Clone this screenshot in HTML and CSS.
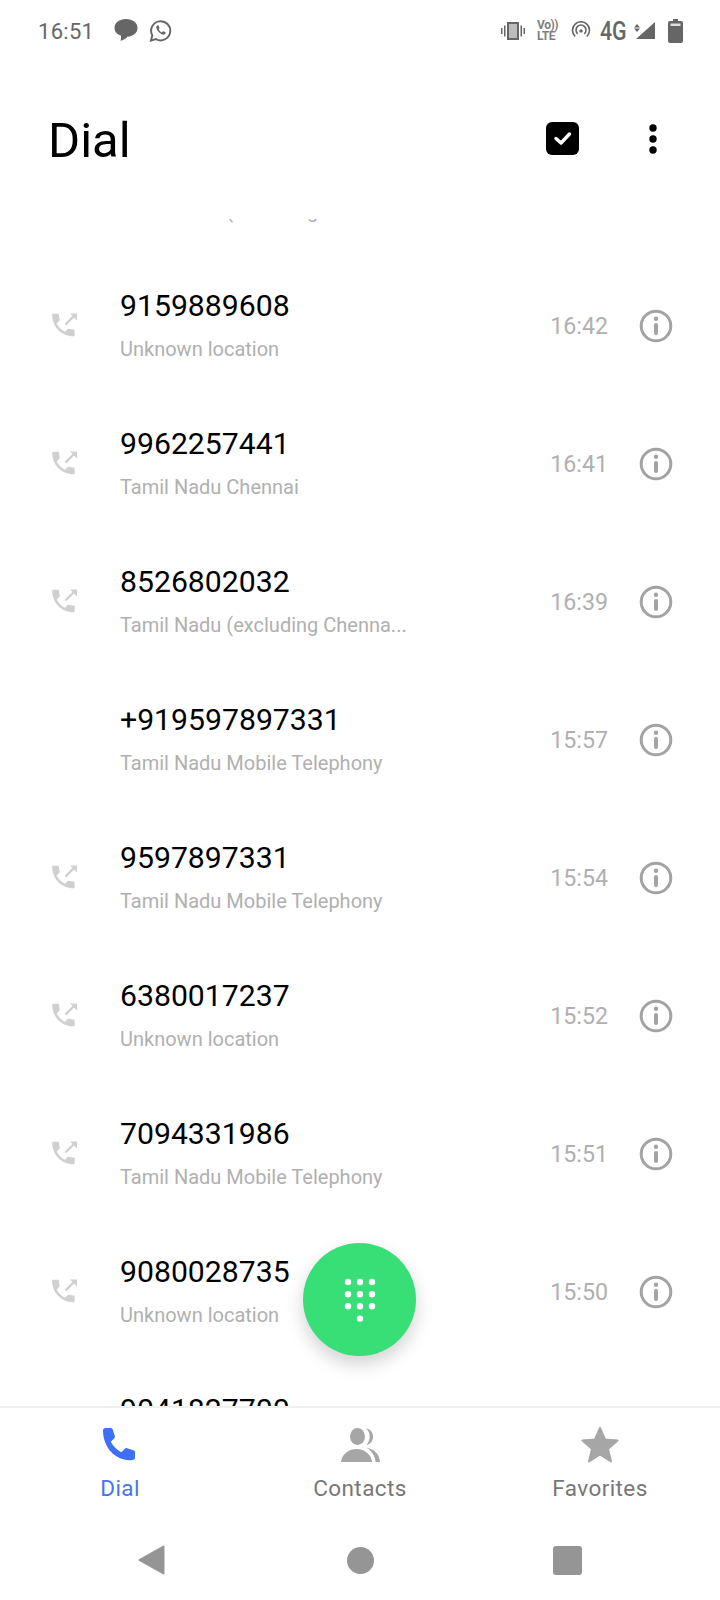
FILE: index.html
```html
<!DOCTYPE html>
<html lang="en">
<head>
<meta charset="utf-8">
<title>Dial</title>
<link rel="stylesheet" href="styles.css">
</head>
<body>
<div class="app">
  <div class="status">
    <div class="status-left">
      <span class="clock">16:51</span>
      <svg class="s-msg" viewBox="0 0 24 22"><path fill="#666" d="M12 0C5.400 0 .5 3.600.5 9c0 3.800 2.800 6.500 6.300 7.600.5 1.700.3 3.600-.3 5.100 2.700-.5 5.200-2 7-4C19.300 17.300 23.500 14 23.500 9 23.500 3.600 18.600 0 12 0z"/></svg>
      <svg class="s-wa" viewBox="0 0 24 24"><path fill="none" stroke="#666" stroke-width="2" d="M2 22.500l1.500-5.300A10 10 0 1 1 7.300 21z"/><path fill="#666" d="M8.800 6.800c-.9.600-1.500 1.800-1 3.200 1 2.900 3.300 5.100 6.200 6.200 1.400.4 2.700-.1 3.200-1.100.3-.6.200-1.100-.1-1.300l-2-1c-.4-.1-.7 0-.9.300l-.7.900c-1.500-.6-2.700-1.800-3.400-3.300l.7-.8c.2-.3.200-.6.100-.9l-.8-2c-.3-.5-.8-.5-1.300-.2z"/></svg>
    </div>
    <div class="status-right">
      <svg class="s-vib" viewBox="0 0 24 20"><path fill="#666" fill-rule="evenodd" d="M6 1h12v18H6zM8 3v14h8V3zM0 7h1.500v6H0zM3 4.500h1.500v11H3zM19.500 4.500H21v11h-1.500zM22.500 7H24v6h-1.500z"/><rect x="8" y="3" width="8" height="14" fill="#bbb"/></svg>
      <span class="volte"><span class="volte-a">Vo))</span><span class="volte-b">LTE</span></span>
      <svg class="s-hot" viewBox="0 0 20 20"><g fill="none" stroke="#666" stroke-width="1.600"><path d="M4.200 15.500a8.500 8.500 0 1 1 11.600 0"/><path d="M6.700 12.800a5 5 0 1 1 6.600 0"/></g><circle cx="10" cy="10" r="1.700" fill="#666"/></svg>
      <span class="net">4G</span>
      <svg class="s-sig" viewBox="0 0 21 18"><path fill="#666" d="M21 0v17H2z"/><path fill="#666" d="M3 2l3 3.500H0zM3 10L0 6.500h6z"/></svg>
      <svg class="s-bat" viewBox="0 0 15 24"><path fill="#666" d="M5 0h5v2h3a2 2 0 0 1 2 2v18a2 2 0 0 1-2 2H2a2 2 0 0 1-2-2V4a2 2 0 0 1 2-2h3z"/><rect x="2.500" y="4.500" width="10" height="2.500" fill="#ddd"/></svg>
    </div>
  </div>

  <header class="header">
    <h1 class="title">Dial</h1>
    <div class="actions">
      <svg class="a-check" viewBox="0 0 33 33"><rect width="33" height="33" rx="6" fill="#000"/><path d="M10 16.500l5 4.500 8.500-9" fill="none" stroke="#fff" stroke-width="3.400" stroke-linecap="round" stroke-linejoin="round"/></svg>
      <svg class="a-more" viewBox="0 0 8 30"><circle cx="4" cy="4" r="3.700"/><circle cx="4" cy="15" r="3.700"/><circle cx="4" cy="26" r="3.700"/></svg>
    </div>
  </header>

  <main class="list">
    <div class="rows">
      <div class="row"><span class="slot"></span><div class="info"><div class="num">9790123456</div><div class="loc">Tamil Nadu (excluding Chenna...</div></div><span class="time">16:45</span><svg class="info-i" viewBox="0 0 34 34"><use href="#i-info"/></svg></div>

      <div class="row"><svg class="call" viewBox="0 0 26 24"><use href="#i-call"/></svg><div class="info"><div class="num">9159889608</div><div class="loc">Unknown location</div></div><span class="time">16:42</span><svg class="info-i" viewBox="0 0 34 34"><use href="#i-info"/></svg></div>

      <div class="row"><svg class="call" viewBox="0 0 26 24"><use href="#i-call"/></svg><div class="info"><div class="num">9962257441</div><div class="loc">Tamil Nadu Chennai</div></div><span class="time">16:41</span><svg class="info-i" viewBox="0 0 34 34"><use href="#i-info"/></svg></div>

      <div class="row"><svg class="call" viewBox="0 0 26 24"><use href="#i-call"/></svg><div class="info"><div class="num">8526802032</div><div class="loc">Tamil Nadu (excluding Chenna...</div></div><span class="time">16:39</span><svg class="info-i" viewBox="0 0 34 34"><use href="#i-info"/></svg></div>

      <div class="row"><span class="slot"></span><div class="info"><div class="num">+919597897331</div><div class="loc">Tamil Nadu Mobile Telephony</div></div><span class="time">15:57</span><svg class="info-i" viewBox="0 0 34 34"><use href="#i-info"/></svg></div>

      <div class="row"><svg class="call" viewBox="0 0 26 24"><use href="#i-call"/></svg><div class="info"><div class="num">9597897331</div><div class="loc">Tamil Nadu Mobile Telephony</div></div><span class="time">15:54</span><svg class="info-i" viewBox="0 0 34 34"><use href="#i-info"/></svg></div>

      <div class="row"><svg class="call" viewBox="0 0 26 24"><use href="#i-call"/></svg><div class="info"><div class="num">6380017237</div><div class="loc">Unknown location</div></div><span class="time">15:52</span><svg class="info-i" viewBox="0 0 34 34"><use href="#i-info"/></svg></div>

      <div class="row"><svg class="call" viewBox="0 0 26 24"><use href="#i-call"/></svg><div class="info"><div class="num">7094331986</div><div class="loc">Tamil Nadu Mobile Telephony</div></div><span class="time">15:51</span><svg class="info-i" viewBox="0 0 34 34"><use href="#i-info"/></svg></div>

      <div class="row"><svg class="call" viewBox="0 0 26 24"><use href="#i-call"/></svg><div class="info"><div class="num">9080028735</div><div class="loc">Unknown location</div></div><span class="time">15:50</span><svg class="info-i" viewBox="0 0 34 34"><use href="#i-info"/></svg></div>

      <div class="row"><svg class="call" viewBox="0 0 26 24"><use href="#i-call"/></svg><div class="info"><div class="num">9041827700</div><div class="loc">Unknown location</div></div><span class="time">15:48</span><svg class="info-i" viewBox="0 0 34 34"><use href="#i-info"/></svg></div>
    </div>
    <button class="fab" aria-label="Dial pad">
      <svg class="fab-icon" viewBox="0 0 32 44"><g fill="#fff"><circle cx="4" cy="4" r="3.200"/><circle cx="16" cy="4" r="3.200"/><circle cx="28" cy="4" r="3.200"/><circle cx="4" cy="16.300" r="3.200"/><circle cx="16" cy="16.300" r="3.200"/><circle cx="28" cy="16.300" r="3.200"/><circle cx="4" cy="28.300" r="3.200"/><circle cx="16" cy="28.300" r="3.200"/><circle cx="28" cy="28.300" r="3.200"/><circle cx="16" cy="40.600" r="3.200"/></g></svg>
    </button>
  </main>

  <nav class="tabs">
    <div class="tab active">
      <svg class="tab-icon" viewBox="0 0 40 36"><path fill="#3f6ff5" d="M3 3.500C3 2 4 1 5.500 1h5c1.200 0 2 .6 2.300 1.700l2 6.300c.3 1 0 1.800-.7 2.500l-3.300 3.200c2.500 4.700 5.800 8 10.600 10.500l3.200-3.300c.7-.7 1.600-1 2.500-.6l6.300 2c1 .3 1.600 1.200 1.600 2.200v5c0 1.500-1 2.500-2.500 2.500C16.500 35 3 21 3 3.500z"/></svg>
      <span class="tab-label">Dial</span>
    </div>
    <div class="tab">
      <svg class="tab-icon" viewBox="0 0 40 36"><g fill="#a6a6a6"><ellipse cx="17.500" cy="9.500" rx="7.500" ry="8.500"/><path d="M1 35c.5-7 7-13 15.500-13S31.500 28 32 35H1z"/><path d="M26 1.500c4 .5 7 3.500 7 8s-2.500 7.500-6.500 8.500c2-2.500 3.200-5.300 3.200-8.500S28.500 3.500 26 1.500z"/><path d="M27 21c7 1 12.500 6 13 14h-4.500c-.5-6-3.500-10.500-8.500-14z"/></g></svg>
      <span class="tab-label">Contacts</span>
    </div>
    <div class="tab">
      <svg class="tab-icon" viewBox="0 0 40 36"><path fill="#a6a6a6" stroke="#a6a6a6" stroke-width="2" stroke-linejoin="round" d="M20 1l5 11.500 12.500 1-9.500 8.500 3 12.500L20 27.500 9 34.500l3-12.500-9.500-8.500 12.500-1z"/></svg>
      <span class="tab-label">Favorites</span>
    </div>
  </nav>

  <div class="sysnav">
    <svg class="sys-back" viewBox="0 0 27 30"><path fill="#959595" stroke="#959595" stroke-width="2" stroke-linejoin="round" d="M1.500 15L25.500 1.500v27z"/></svg>
    <span class="sys-home"></span>
    <span class="sys-recent"></span>
  </div>
</div>

<svg class="defs" aria-hidden="true">
  <defs>
    <g id="i-call">
      <path fill="#d0d0d0" transform="translate(-3.600 -2.900) scale(1.250)" d="M6.620 10.790c1.440 2.830 3.760 5.140 6.590 6.590l2.200-2.200c.27-.27.67-.36 1.020-.24 1.120.37 2.330.57 3.570.57.55 0 1 .45 1 1V20c0 .55-.45 1-1 1-9.390 0-17-7.610-17-17 0-.55.45-1 1-1h3.500c.55 0 1 .45 1 1 0 1.250.2 2.450.57 3.570.11.350.03.740-.25 1.020l-2.200 2.200z"/>
      <path fill="none" stroke="#d0d0d0" stroke-width="2.400" d="M13.500 11.500L22.500 2.500"/>
      <path fill="#d0d0d0" d="M18 .5h7v7z"/>
    </g>
    <g id="i-info">
      <circle cx="17" cy="17" r="14.800" fill="none" stroke="#a3a3a3" stroke-width="3"/>
      <circle cx="17" cy="9.800" r="2.200" fill="#a3a3a3"/>
      <rect x="15" y="14" width="4" height="12" rx="2" fill="#a3a3a3"/>
    </g>
  </defs>
</svg>
</body>
</html>
```
FILE: styles.css
```css
* { box-sizing: border-box; }
html, body { margin: 0; padding: 0; background: #fff; }
body { font-family: Roboto, "Liberation Sans", sans-serif; }
.app { width: 720px; height: 1600px; display: flex; flex-direction: column; overflow: hidden; background: #fff; }

.status { height: 62px; flex: none; padding: 0 37px 0 38px; display: flex; justify-content: space-between; align-items: center; }
.status-left, .status-right { display: flex; align-items: center; }
.clock { font-size: 22px; color: #666; letter-spacing: .3px; margin-right: 20px; }
.s-msg { width: 24px; height: 22px; margin: 0 11px 2px 0; }
.s-wa { width: 23px; height: 23px; margin-bottom: 2px; }
.status-right { color: #666; }
.s-vib { width: 24px; height: 20px; margin-right: 12px; }
.volte { width: 20px; display: flex; flex-direction: column; font: 700 12px/11px Roboto, sans-serif; letter-spacing: -.4px; color: #808080; margin-right: 14px; }
.volte-a, .volte-b { white-space: nowrap; }
.s-hot { width: 20px; height: 20px; margin-right: 9px; }
.net { font-size: 26px; font-weight: 500; margin-right: 7px; transform: scaleX(.82); transform-origin: left; width: 27px; }
.s-sig { width: 21px; height: 18px; margin-right: 13px; }
.s-bat { width: 15px; height: 24px; }

.header { height: 157px; flex: none; padding: 0 63px 4px 48px; display: flex; align-items: center; justify-content: space-between; }
.title { margin: 4px 0 0; font-size: 49px; font-weight: 400; color: #000; }
.actions { display: flex; align-items: center; gap: 70px; }
.a-check { width: 33px; height: 33px; }
.a-more { width: 8px; height: 30px; }

.list { position: relative; flex: 1; min-height: 0; overflow: hidden; }
.rows { margin-top: -100px; }
.row { height: 138px; padding: 0 47px 0 52px; display: flex; align-items: center; }
.call { width: 26px; height: 24px; flex: none; margin: 0 42px 2px 0; }
.slot { width: 26px; flex: none; margin-right: 42px; }
.info { flex: 1; min-width: 0; padding-bottom: 3px; }
.num { font-size: 30.200px; line-height: 36px; color: #000; }
.loc { font-size: 20px; line-height: 24px; margin-top: 13px; color: #b0b0b0; }
.time { font-size: 23.200px; color: #b0b0b0; margin-right: 31px; }
.info-i { width: 34px; height: 34px; flex: none; }

.fab { position: absolute; left: 303px; top: 1024px; width: 113px; height: 113px; border: 0; border-radius: 50%; background: #38de76; padding: 0; display: flex; align-items: center; justify-content: center; box-shadow: 0 8px 18px rgba(0,0,0,.18); }
.fab-icon { width: 32px; height: 44px; }

.tabs { height: 112px; flex: none; display: flex; border-top: 2px solid #f0f0f0; background: #fff; }
.tab { flex: 1; display: flex; flex-direction: column; align-items: center; padding-top: 19px; }
.tab-icon { height: 36px; width: 40px; }
.tab-label { font-size: 22.500px; line-height: 26px; margin-top: 12px; color: #777; letter-spacing: .4px; }
.tab.active .tab-label { color: #4a74ef; }

.sysnav { height: 82px; flex: none; padding: 2px 0 0 138px; display: flex; align-items: center; }
.sys-back { width: 27px; height: 30px; margin-right: 182px; }
.sys-home { width: 27px; height: 27px; border-radius: 50%; background: #959595; margin-right: 179px; }
.sys-recent { width: 29px; height: 29px; border-radius: 3px; background: #959595; }
.defs { position: absolute; width: 0; height: 0; }
```
